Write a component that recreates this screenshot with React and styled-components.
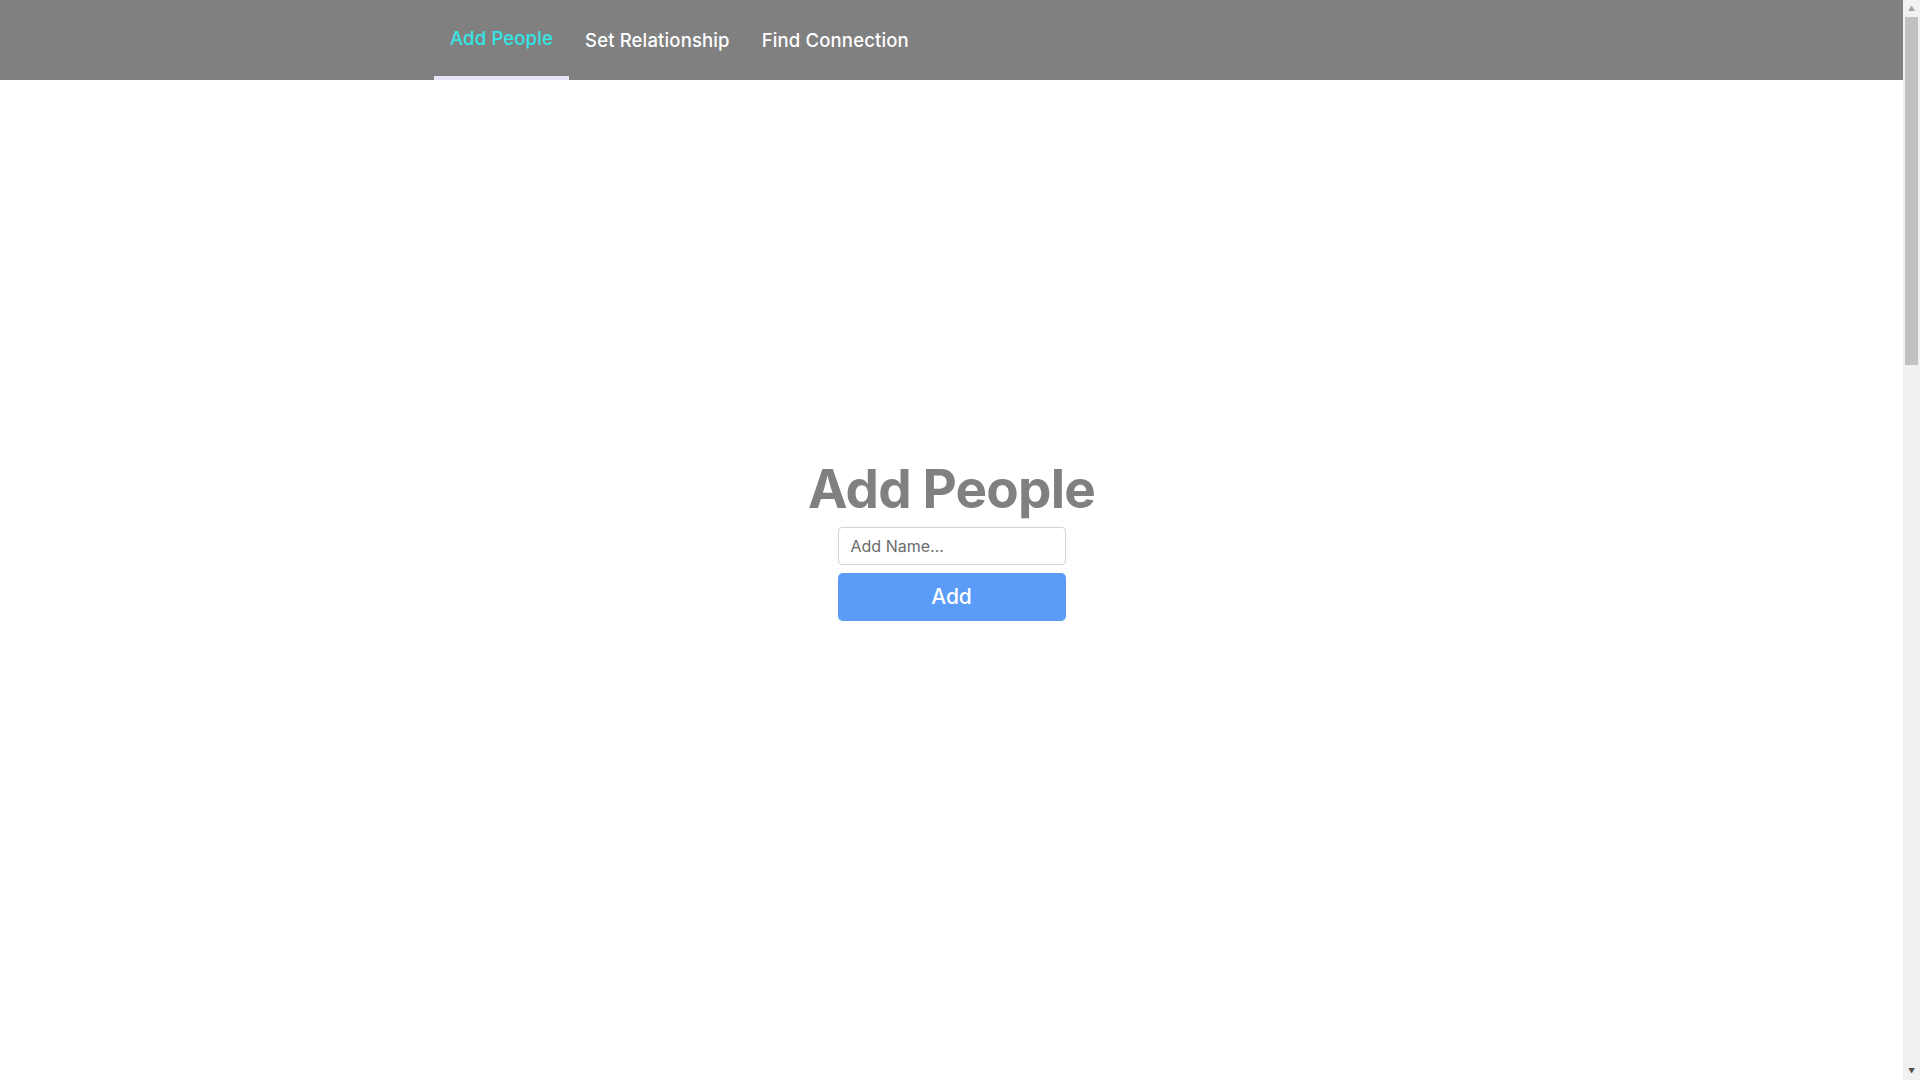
import React from "react";
import styled, { createGlobalStyle } from "styled-components";

const GlobalStyle = createGlobalStyle`
  html, body { margin: 0; padding: 0; background: #ffffff; }
  body { font-family: Inter, "Open Sans", "Liberation Sans", sans-serif; }
  * { box-sizing: border-box; }
`;

const Page = styled.div`
  padding-right: 17px;
`;

const NavBar = styled.nav`
  height: 80px;
  background: #808080;
`;

const NavInner = styled.ul`
  margin: 0 auto;
  padding: 0;
  list-style: none;
  max-width: 1035px;
  height: 100%;
  display: flex;
  align-items: stretch;
`;

const Tab = styled.li`
  display: flex;
  align-items: center;
  padding: 0 16px;
  font-size: 18.5px;
  font-weight: 500;
  letter-spacing: 0.15px;
  color: ${(p) => (p.$active ? "#33e6e6" : "#ffffff")};
  border-bottom: ${(p) => (p.$active ? "4px solid #e6e6fa" : "0")};
  cursor: pointer;
  white-space: nowrap;
`;

const Section = styled.section`
  height: ${(p) => p.$h}px;
  display: flex;
  flex-direction: column;
  align-items: center;
  justify-content: center;
  padding-bottom: ${(p) => p.$pb || 0}px;
`;

const Title = styled.h1`
  margin: 0 0 8px;
  font-size: 53px;
  line-height: 60px;
  font-weight: 700;
  letter-spacing: -0.8px;
  color: #808080;
`;

const Form = styled.form`
  display: flex;
  flex-direction: column;
  gap: 8px;
  width: 228px;
`;

const Input = styled.input`
  height: 38px;
  width: 100%;
  border: 1px solid #ced4da;
  border-radius: 4px;
  padding: 0 12px;
  font-family: inherit;
  font-size: 16px;
  color: #495057;
  &::placeholder { color: #6c6c6c; }
`;

const Button = styled.button`
  height: 48px;
  width: 100%;
  border: 0;
  border-radius: 5px;
  background: #5b9cf8;
  color: #ffffff;
  font-family: inherit;
  font-size: 21px;
  font-weight: 500;
  cursor: pointer;
`;

const ScrollTrack = styled.aside`
  position: fixed;
  top: 0;
  right: 0;
  width: 17px;
  height: 100vh;
  background: #f1f1f1;
  display: flex;
  flex-direction: column;
  align-items: center;
`;

const Arrow = styled.div`
  height: 17px;
  width: 17px;
  display: flex;
  align-items: center;
  justify-content: center;
  color: ${(p) => (p.$dark ? "#505050" : "#a3a3a3")};
  font-size: 7px;
  line-height: 1;
`;

const Thumb = styled.div`
  width: 13px;
  height: 348px;
  background: #c1c1c1;
  margin: 0 2px;
`;

const Spacer = styled.div`
  flex: 1;
`;

export default function App() {
  return (
    <Page>
      <GlobalStyle />
      <NavBar>
        <NavInner>
          <Tab $active>Add People</Tab>
          <Tab>Set Relationship</Tab>
          <Tab>Find Connection</Tab>
        </NavInner>
      </NavBar>
      <Section $h={1002} $pb={83}>
        <Title>Add People</Title>
        <Form onSubmit={(e) => e.preventDefault()}>
          <Input placeholder="Add Name..." />
          <Button type="submit">Add</Button>
        </Form>
      </Section>
      <Section $h={1082} />
      <Section $h={1082} />
      <ScrollTrack aria-hidden="true">
        <Arrow>▲</Arrow>
        <Thumb />
        <Spacer />
        <Arrow $dark>▼</Arrow>
      </ScrollTrack>
    </Page>
  );
}
